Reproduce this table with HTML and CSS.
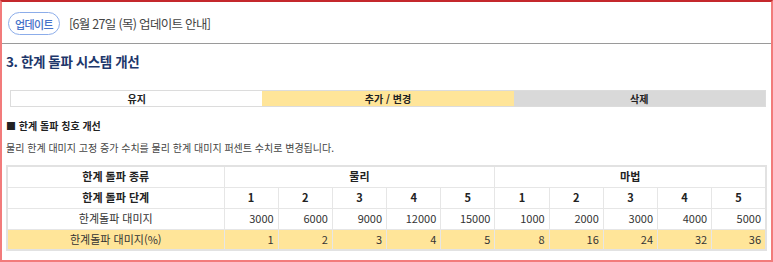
FILE: index.html
```html
<!DOCTYPE html>
<html lang="ko">
<head>
<meta charset="utf-8">
<link rel="stylesheet" href="styles.css">
</head>
<body>
<div class="frame">
  <header class="head">
    <span class="badge">업데이트</span>
    <span class="head-title">[6월 27일 (목) 업데이트 안내]</span>
  </header>
  <section class="content">
    <h2 class="sec-title">3. 한계 돌파 시스템 개선</h2>
    <div class="legend">
      <div class="lg lg-keep">유지</div>
      <div class="lg lg-add">추가 / 변경</div>
      <div class="lg lg-del">삭제</div>
    </div>
    <h3 class="sub-title">■ 한계 돌파 칭호 개선</h3>
    <p class="desc">물리 한계 대미지 고정 증가 수치를 물리 한계 대미지 퍼센트 수치로 변경됩니다.</p>
    <table class="tbl">
      <colgroup>
        <col class="c-first">
        <col><col><col><col><col><col><col><col><col><col>
      </colgroup>
      <tr class="hd">
        <th>한계 돌파 종류</th>
        <th colspan="5">물리</th>
        <th colspan="5">마법</th>
      </tr>
      <tr class="hd">
        <th>한계 돌파 단계</th>
        <th>1</th><th>2</th><th>3</th><th>4</th><th>5</th>
        <th>1</th><th>2</th><th>3</th><th>4</th><th>5</th>
      </tr>
      <tr class="dt">
        <td class="lbl">한계돌파 대미지</td>
        <td>3000</td><td>6000</td><td>9000</td><td>12000</td><td>15000</td>
        <td>1000</td><td>2000</td><td>3000</td><td>4000</td><td>5000</td>
      </tr>
      <tr class="dt hl">
        <td class="lbl">한계돌파 대미지(%)</td>
        <td>1</td><td>2</td><td>3</td><td>4</td><td>5</td>
        <td>8</td><td>16</td><td>24</td><td>32</td><td>36</td>
      </tr>
    </table>
  </section>
</div>
</body>
</html>
```
FILE: styles.css
```css
* { box-sizing: border-box; }
html, body { margin: 0; padding: 0; background: #fff; }
body { font-family: "Noto Sans CJK KR", "Noto Sans", sans-serif; color: #333; }
.frame {
  width: 773px;
  height: 262px;
  border-top: 2px solid #c4282c;
  border-left: 2px solid #f27b7b;
  border-right: 2px solid #f27b7b;
  border-bottom: 2px solid #f27b7b;
  overflow: hidden;
}
.head {
  height: 42px;
  border-bottom: 1px solid #9a9a9a;
  display: flex;
  align-items: center;
  padding-left: 6px;
  padding-top: 2px;
  gap: 9px;
}
.badge {
  display: inline-flex;
  align-items: center;
  justify-content: center;
  flex: none;
  width: 52px;
  height: 23px;
  border: 1px solid #8cadea;
  border-radius: 12px;
  color: #4572c9;
  font-size: 11px;
  font-weight: 500;
  letter-spacing: -0.6px;
  white-space: nowrap;
}
.head-title { font-size: 12.5px; color: #444; letter-spacing: -0.7px; }
.content { padding: 0 4px 0 4px; }
.sec-title {
  margin: 8px 0 0 0;
  font-size: 13.5px;
  line-height: 18px;
  font-weight: 700;
  color: #1d376b;
  letter-spacing: -0.4px;
}
.legend {
  margin: 20px 0 0 4px;
  width: 756px;
  display: flex;
  border: 1px solid #dcdcdc;
  height: 17px;
}
.lg {
  flex: 1;
  display: flex;
  align-items: center;
  justify-content: center;
  font-size: 10px;
  font-weight: 700;
  color: #222;
}
.lg-keep { background: #fff; }
.lg-add { background: #ffe599; }
.lg-del { background: #d9d9d9; }
.sub-title {
  margin: 11px 0 0 0;
  font-size: 10px;
  line-height: 16px;
  font-weight: 700;
  color: #222;
}
.desc {
  margin: 6px 0 0 0;
  font-size: 10px;
  line-height: 16px;
  color: #444;
}
.tbl {
  margin: 9px 0 0 0;
  width: 761px;
  border-collapse: collapse;
  table-layout: fixed;
  border: 2px solid #e2e2e2;
  font-size: 11px;
}
.c-first { width: 217px; }
.tbl th, .tbl td {
  border: 1px solid #e6e6e6;
  height: 21px;
  padding: 0 4px;
  line-height: 19px;
}
.tbl th { font-weight: 700; color: #222; text-align: center; }
.tbl td { text-align: right; color: #333; }
.tbl td.lbl { text-align: center; }
.hl td { background: #ffe599; }
```
